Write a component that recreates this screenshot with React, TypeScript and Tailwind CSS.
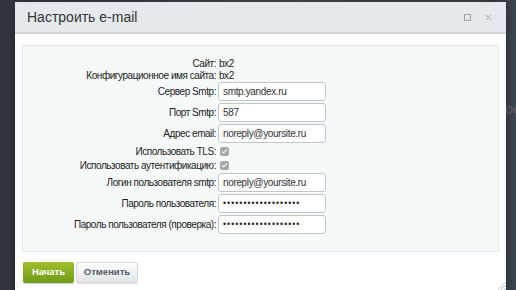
import { Check, X } from 'lucide-react'

const font = { fontFamily: '"Liberation Sans", Arial, sans-serif' }

function TextRow({ label, value }: { label: string; value: string }) {
  return (
    <div className="flex h-[12px] items-center">
      <div className="w-[193px] shrink-0 text-right">{label}</div>
      <div className="pl-[3px]">{value}</div>
    </div>
  )
}

function InputRow({ label, value, password }: { label: string; value: string; password?: boolean }) {
  return (
    <div className="flex h-[21px] items-center">
      <div className="w-[193px] shrink-0 text-right">{label}</div>
      <div className="pl-[2px]">
        <div className="flex h-[19px] w-[108px] items-center rounded-[3px] border border-[#bfc6cb] bg-white px-[4px] text-[10px] tracking-[-0.35px] text-[#333]">
          {password ? (
            <span className="text-[8.5px] tracking-[1.1px] text-[#222]">•••••••••••••••••••</span>
          ) : (
            value
          )}
        </div>
      </div>
    </div>
  )
}

function CheckRow({ label }: { label: string }) {
  return (
    <div className="flex h-[14px] items-center">
      <div className="w-[193px] shrink-0 text-right">{label}</div>
      <div className="pl-[4px]">
        <div className="flex h-[9px] w-[9px] items-center justify-center rounded-[2px] bg-[#a6a8aa]">
          <Check size={7} strokeWidth={3.5} className="text-white" />
        </div>
      </div>
    </div>
  )
}

export default function App() {
  return (
    <div
      className="relative h-[290px] w-[516px] overflow-hidden bg-gradient-to-r from-[#2f353b] via-[#454c55] to-[#3c434c]"
      style={font}
    >
      {/* page behind the dialog */}
      <div className="absolute left-[505px] top-[98px] text-[15px] text-[#5d646c]">ос</div>

      {/* dialog */}
      <div className="absolute left-[15px] top-[2px] flex h-[300px] w-[491px] flex-col bg-white shadow-[0_0_8px_rgba(0,0,0,0.4)]">
        {/* header */}
        <div className="flex h-[32px] shrink-0 items-center border-b-2 border-[#cdd3d6] bg-[#e3e9ec] pl-[12px] pr-[13px]">
          <div className="flex-1 text-[14px] text-[#333]">Настроить e-mail</div>
          <div className="mr-[13px] h-[7px] w-[7px] border border-[#9aa2a8]" />
          <X size={9} strokeWidth={2.4} className="text-[#9aa2a8]" />
        </div>

        {/* body */}
        <div className="px-[7px] pt-[11px]">
          <div className="border border-[#dfe8ea] bg-[#f5f9f9] pb-[16px] pt-[11px] text-[10px] tracking-[-0.45px] text-[#222]">
            <TextRow label="Сайт:" value="bx2" />
            <TextRow label="Конфигурационное имя сайта:" value="bx2" />
            <InputRow label="Сервер Smtp:" value="smtp.yandex.ru" />
            <InputRow label="Порт Smtp:" value="587" />
            <InputRow label="Адрес email:" value="noreply@yoursite.ru" />
            <CheckRow label="Использовать TLS:" />
            <CheckRow label="Использовать аутентификацию:" />
            <InputRow label="Логин пользователя smtp:" value="noreply@yoursite.ru" />
            <InputRow label="Пароль пользователя:" value="" password />
            <InputRow label="Пароль пользователя (проверка):" value="" password />
          </div>

          {/* buttons */}
          <div className="mt-[10px] flex gap-[2px] pl-[1px]">
            <button className="h-[21px] w-[51px] rounded-[2px] bg-gradient-to-b from-[#9fc02a] to-[#72991a] text-[9.5px] font-bold text-white shadow-[0_1px_1px_rgba(0,0,0,0.2)]">
              Начать
            </button>
            <button className="h-[21px] w-[62px] rounded-[2px] border border-[#d3d9dc] bg-gradient-to-b from-white to-[#dfe4e7] text-[9.5px] font-bold text-[#535c69] shadow-[0_1px_1px_rgba(0,0,0,0.12)]">
              Отменить
            </button>
          </div>
        </div>

        {/* resize grip */}
        <svg className="absolute left-[482px] top-[279px]" width="9" height="9" viewBox="0 0 9 9">
          <path d="M9 1 L1 9 M9 4 L4 9 M9 7 L7 9" stroke="#c8ccd0" strokeWidth="1" />
        </svg>
      </div>
    </div>
  )
}
